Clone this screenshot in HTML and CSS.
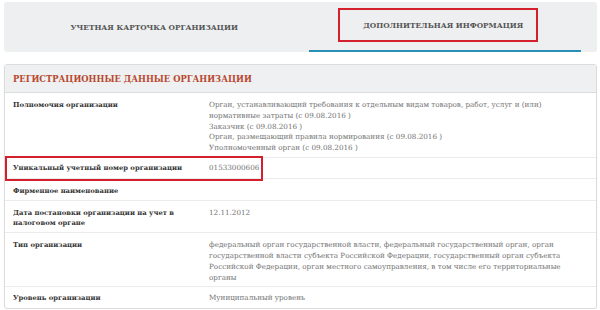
FILE: index.html
```html
<!DOCTYPE html>
<html lang="ru">
<head>
  <meta charset="UTF-8" />
  <title>Дополнительная информация</title>
  <link rel="stylesheet" href="styles.css">
</head>
<body>
  <div class="tabs">
    <div class="tab">Учетная карточка организации</div>
    <div class="tab active"><span class="mark">Дополнительная информация</span></div>
  </div>

  <div class="panel">
    <div class="panel-title">Регистрационные данные организации</div>

    <div class="row">
      <div class="label">Полномочия организации</div>
      <div class="value">
        Орган, устанавливающий требования к отдельным видам товаров, работ, услуг и (или) нормативные затраты (с 09.08.2016 )<br>
        Заказчик (с 09.08.2016 )<br>
        Орган, размещающий правила нормирования (с 09.08.2016 )<br>
        Уполномоченный орган (с 09.08.2016 )
      </div>
    </div>

    <div class="row marked">
      <div class="label">Уникальный учетный номер организации</div>
      <div class="value">01533000606</div>
    </div>

    <div class="row">
      <div class="label">Фирменное наименование</div>
      <div class="value"></div>
    </div>

    <div class="row">
      <div class="label">Дата постановки организации на учет в налоговом органе</div>
      <div class="value">12.11.2012</div>
    </div>

    <div class="row">
      <div class="label">Тип организации</div>
      <div class="value">федеральный орган государственной власти, федеральный государственный орган, орган государственной власти субъекта Российской Федерации, государственный орган субъекта Российской Федерации, орган местного самоуправления, в том числе его территориальные органы</div>
    </div>

    <div class="row">
      <div class="label">Уровень организации</div>
      <div class="value">Муниципальный уровень</div>
    </div>
  </div>
</body>
</html>
```

FILE: styles.css
```css
body {
  margin: 0;
  padding: 2px 3px 0 4px;
  background: #fff;
  font-family: 'DejaVu Serif', serif;
  color: #333;
}
.tabs {
  display: flex;
  gap: 18px;
  height: 50px;
  padding: 0 16px 0 14px;
  background: #eeeff1;
  border-radius: 3px;
}
.tab {
  flex: 1;
  display: flex;
  align-items: center;
  justify-content: center;
  font-family: 'DejaVu Serif Condensed', 'DejaVu Serif', serif;
  font-size: 8.2px;
  font-weight: bold;
  text-transform: uppercase;
  color: #555;
}
.tab.active {
  border-bottom: 2px solid #2a8fb6;
  height: 48px;
}
.mark {
  box-sizing: border-box;
  display: flex;
  align-items: center;
  width: 200px;
  height: 34px;
  padding-left: 23px;
  border: 2px solid #d41f2c;
  margin: -2px 13px 0 0;
}
.panel {
  margin-top: 12px;
  border: 1px solid #dcdcdc;
  border-radius: 3px;
  box-shadow: 0 1px 2px rgba(0,0,0,0.06);
}
.panel-title {
  height: 27px;
  line-height: 28px;
  padding-left: 8px;
  background: #eff0f2;
  border-bottom: 1px solid #dcdcdc;
  font-family: 'DejaVu Serif Condensed', 'DejaVu Serif', serif;
  color: #b8492f;
  font-size: 9.3px;
  font-weight: bold;
  text-transform: uppercase;
}
.row {
  position: relative;
  display: grid;
  grid-template-columns: 196px 1fr;
  padding: 7px 22px 3px 8px;
  border-bottom: 1px solid #ebebeb;
  font-size: 7.2px;
  line-height: 10.8px;
}
.row:last-child {
  border-bottom: none;
  padding-top: 6px;
  padding-bottom: 4px;
}
.label {
  font-size: 6.8px;
  font-weight: bold;
  color: #333;
  padding-right: 10px;
}
.value {
  color: #727272;
}
.row.marked {
  padding-top: 5px;
  padding-bottom: 4px;
}
.row.marked::after {
  content: "";
  position: absolute;
  left: 0;
  top: -2px;
  width: 254px;
  height: 21px;
  border: 2px solid #d41f2c;
}
```
